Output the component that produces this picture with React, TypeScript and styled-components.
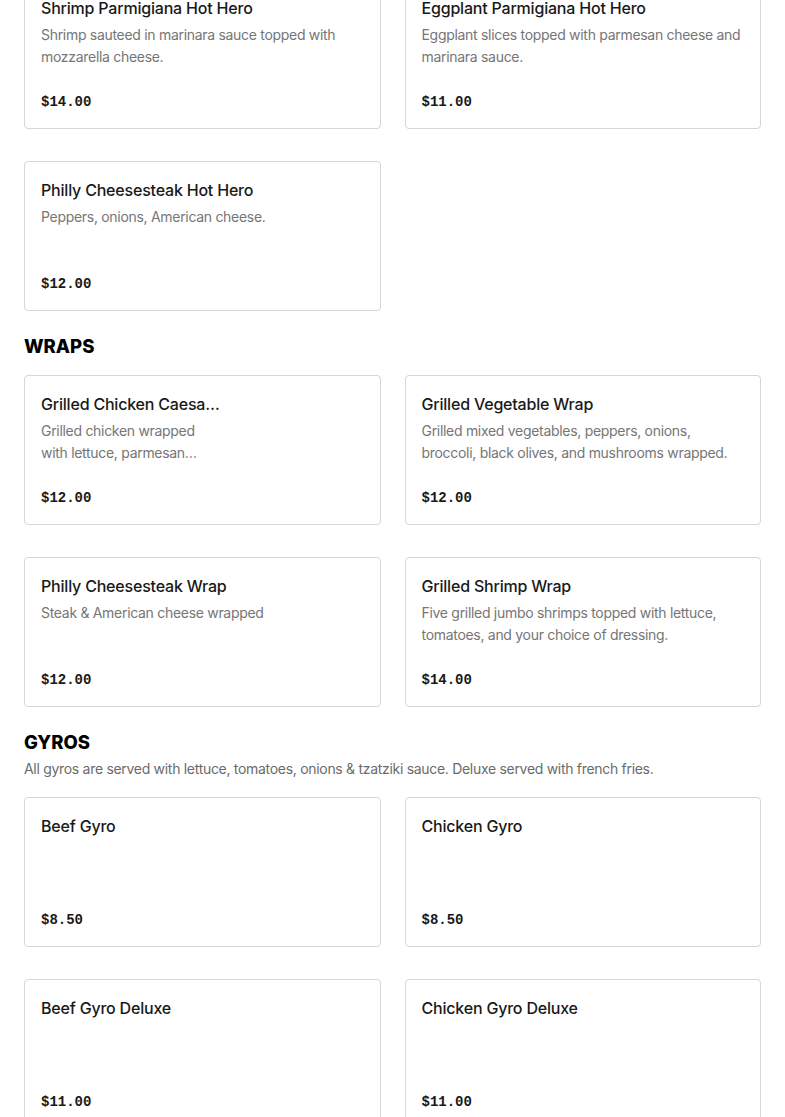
import { FC } from 'react';
import styled, { createGlobalStyle } from 'styled-components';

type Item = {
    name: string;
    desc?: string;
    price: string;
    narrow?: boolean;
};

type Section = {
    title?: string;
    note?: string;
    items: Item[];
};

const sections: Section[] = [
    {
        items: [
            { name: 'Shrimp Parmigiana Hot Hero', desc: 'Shrimp sauteed in marinara sauce topped with mozzarella cheese.', price: '$14.00' },
            { name: 'Eggplant Parmigiana Hot Hero', desc: 'Eggplant slices topped with parmesan cheese and marinara sauce.', price: '$11.00' },
            { name: 'Philly Cheesesteak Hot Hero', desc: 'Peppers, onions, American cheese.', price: '$12.00' },
        ],
    },
    {
        title: 'WRAPS',
        items: [
            { name: 'Grilled Chicken Caesar Wrap', desc: 'Grilled chicken wrapped with lettuce, parmesan cheese, croutons and caesar dressing.', price: '$12.00', narrow: true },
            { name: 'Grilled Vegetable Wrap', desc: 'Grilled mixed vegetables, peppers, onions, broccoli, black olives, and mushrooms wrapped.', price: '$12.00' },
            { name: 'Philly Cheesesteak Wrap', desc: 'Steak & American cheese wrapped', price: '$12.00' },
            { name: 'Grilled Shrimp Wrap', desc: 'Five grilled jumbo shrimps topped with lettuce, tomatoes, and your choice of dressing.', price: '$14.00' },
        ],
    },
    {
        title: 'GYROS',
        note: 'All gyros are served with lettuce, tomatoes, onions & tzatziki sauce. Deluxe served with french fries.',
        items: [
            { name: 'Beef Gyro', price: '$8.50' },
            { name: 'Chicken Gyro', price: '$8.50' },
            { name: 'Beef Gyro Deluxe', price: '$11.00' },
            { name: 'Chicken Gyro Deluxe', price: '$11.00' },
        ],
    },
];

export default function App() {
    return (
        <>
            <GlobalStyle />
            <SPage>
                {sections.map((sec, i) => (
                    <SSection key={i}>
                        {sec.title && <SHeading>{sec.title}</SHeading>}
                        {sec.note && <SNote>{sec.note}</SNote>}
                        <SGrid $spaced={!!sec.title}>
                            {sec.items.map((item) => (
                                <Card key={item.name} item={item} />
                            ))}
                        </SGrid>
                    </SSection>
                ))}
            </SPage>
        </>
    );
}

const Card: FC<{ item: Item }> = ({ item }) => (
    <SCard>
        <SText $narrow={item.narrow}>
            <SName>{item.name}</SName>
            {item.desc && <SDesc>{item.desc}</SDesc>}
        </SText>
        <SPrice>{item.price}</SPrice>
    </SCard>
);

const GlobalStyle = createGlobalStyle`
    body {
        margin: 0;
        background: #ffffff;
        font-family: Inter, "Liberation Sans", Arial, sans-serif;
        color: #191919;
    }
`;

// page is scrolled a little, so the first row starts above the top edge
const SPage = styled.main`
    padding: 0 24px;
    margin-top: -21px;
    display: flex;
    flex-direction: column;
    gap: 23px;
`;

const SSection = styled.section`
    display: flex;
    flex-direction: column;
`;

const SHeading = styled.h2`
    margin: 0;
    font-size: 18.5px;
    line-height: 24px;
    font-weight: 800;
    color: #000;
`;

const SNote = styled.p`
    margin: 4px 0 0;
    font-size: 14px;
    line-height: 22px;
    letter-spacing: -0.3px;
    color: #6b6b6b;
`;

const SGrid = styled.div<{ $spaced: boolean }>`
    display: grid;
    grid-template-columns: 1fr 1fr;
    column-gap: 24px;
    row-gap: 32px;
    margin-top: ${(p) => (p.$spaced ? '17px' : '0')};
`;

const SCard = styled.article`
    box-sizing: border-box;
    height: 150px;
    border: 1px solid #d6d6d6;
    border-radius: 4px;
    padding: 15px 16px;
    display: flex;
    flex-direction: column;
    justify-content: space-between;
`;

const SText = styled.div<{ $narrow?: boolean }>`
    max-width: ${(p) => (p.$narrow ? '182px' : 'none')};
`;

const SName = styled.h3`
    margin: 0;
    font-size: 16px;
    line-height: 26px;
    font-weight: 500;
    letter-spacing: -0.2px;
    color: #191919;
    white-space: nowrap;
    overflow: hidden;
    text-overflow: ellipsis;
`;

const SDesc = styled.p`
    margin: 3px 0 0;
    font-size: 14px;
    line-height: 22px;
    letter-spacing: -0.3px;
    color: #767676;
    display: -webkit-box;
    -webkit-line-clamp: 2;
    -webkit-box-orient: vertical;
    overflow: hidden;
`;

const SPrice = styled.div`
    font-family: "Liberation Mono", "DejaVu Sans Mono", monospace;
    font-size: 14px;
    line-height: 22px;
    font-weight: 700;
    color: #191919;
`;
